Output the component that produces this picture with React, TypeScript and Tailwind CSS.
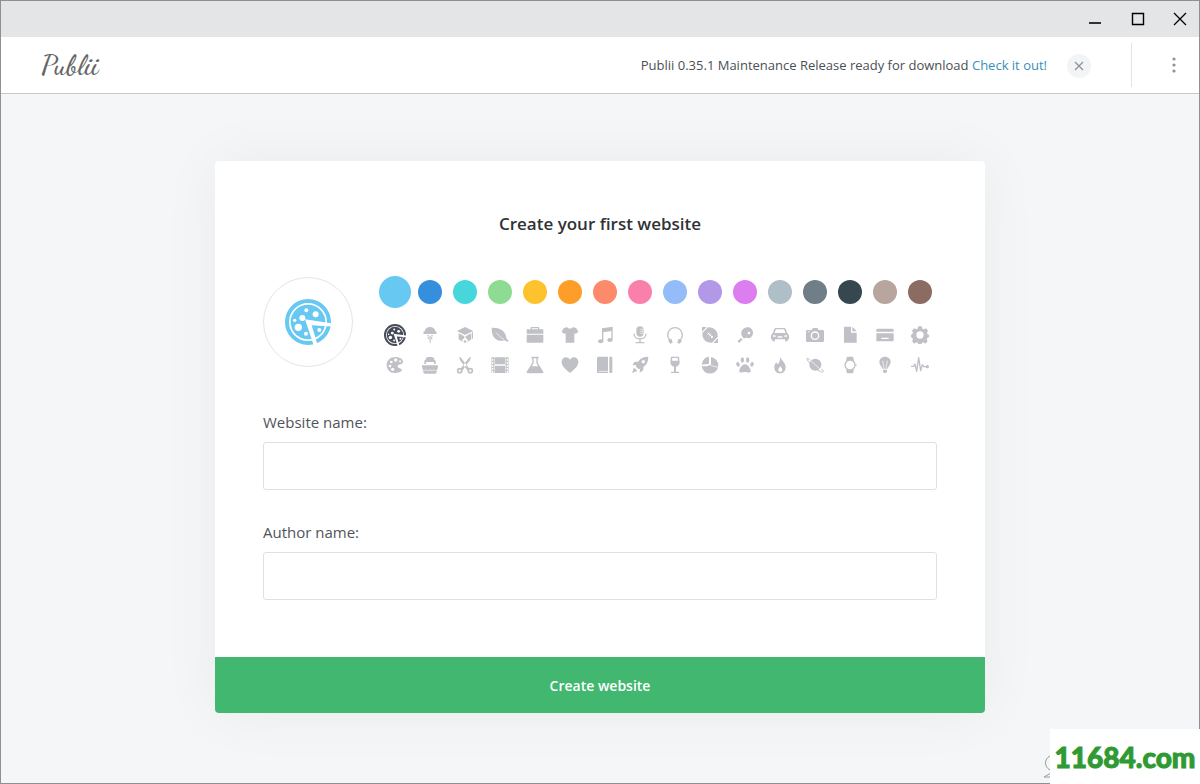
import { useState } from "react";
import type { FormEvent, ReactNode } from "react";
import clsx from "clsx";

const colors = [
  { name: "Sky", bg: "bg-[#67c8f2]", text: "text-[#67c8f2]" },
  { name: "Blue", bg: "bg-[#358fdc]", text: "text-[#358fdc]" },
  { name: "Turquoise", bg: "bg-[#47d6dc]", text: "text-[#47d6dc]" },
  { name: "Green", bg: "bg-[#8edb94]", text: "text-[#8edb94]" },
  { name: "Yellow", bg: "bg-[#fdc32e]", text: "text-[#fdc32e]" },
  { name: "Orange", bg: "bg-[#fe9e28]", text: "text-[#fe9e28]" },
  { name: "Coral", bg: "bg-[#fd8a6a]", text: "text-[#fd8a6a]" },
  { name: "Pink", bg: "bg-[#fb7fab]", text: "text-[#fb7fab]" },
  { name: "Cornflower", bg: "bg-[#94bcf8]", text: "text-[#94bcf8]" },
  { name: "Lavender", bg: "bg-[#b298e6]", text: "text-[#b298e6]" },
  { name: "Magenta", bg: "bg-[#dc7df0]", text: "text-[#dc7df0]" },
  { name: "Silver", bg: "bg-[#afbfc7]", text: "text-[#afbfc7]" },
  { name: "Slate", bg: "bg-[#707e88]", text: "text-[#707e88]" },
  { name: "Navy", bg: "bg-[#37474f]", text: "text-[#37474f]" },
  { name: "Sand", bg: "bg-[#b8a59d]", text: "text-[#b8a59d]" },
  { name: "Brown", bg: "bg-[#8c6c62]", text: "text-[#8c6c62]" },
];

// every glyph lives on a 54x54 grid
const icons: { name: string; art: ReactNode }[] = [
  {
    name: "Pizza",
    art: (
      <g transform="scale(0.3913)">
        <circle cx="69" cy="69" r="63" fill="none" stroke="currentColor" strokeWidth="12" />
        <circle cx="69" cy="69" r="52" />
        <path fill="#fff" d="M60 61l80 12v10l-60-4 18 60-11 3z" />
        <g fill="#fff">
          <circle cx="64" cy="34" r="6" />
          <circle cx="92" cy="46" r="9" />
          <circle cx="52" cy="57" r="9" />
          <circle cx="29" cy="64" r="5" />
          <circle cx="40" cy="85" r="11" />
          <circle cx="63" cy="104" r="6" />
          <circle cx="103" cy="93" r="6" />
        </g>
      </g>
    ),
  },
  {
    name: "Ice cream",
    art: (
      <>
        <path d="M11 24a4 4 0 0 1 0-8C12 8 18 3 27 3s15 5 16 13a4 4 0 0 1 0 8z" />
        <path d="M17 28l4 4 4-4zM24 33l3-3 4 3-4 4zM29 28l4 4 4-4zM19 36l3-3 4 4-4 3zM28 37l4-4 3 3-3 4zM24 41l3-3 4 3-4 4zM25 48l2-3 3 3-3 4z" />
      </>
    ),
  },
  {
    name: "Education",
    art: <path d="M27 3l25 12-25 12L3 15zM8 22l17 9v5l-6 5v6L8 40zM46 22l-17 9v5l6 5v6l11-7zM22 47l5-6 5 6-5 4zM48 18h3v20h-3z" />,
  },
  {
    name: "Leaf",
    art: (
      <>
        <path d="M2 5c24-1 42 8 44 32 2 4 4 5 7 6l-2 4c-4 0-7-2-9-4C18 49 1 35 2 5z" />
        <path d="M16 20c7 9 14 15 23 20" fill="none" stroke="#fff" strokeWidth="2" />
      </>
    ),
  },
  {
    name: "Briefcase",
    art: (
      <>
        <path d="M14 11V6q0-3 3-3h20q3 0 3 3v5h-4V7H18v4z" />
        <path d="M4 10h46q2 0 2 2v11H2V12q0-2 2-2zM2 26h50v21q0 3-3 3H5q-3 0-3-3z" />
      </>
    ),
  },
  {
    name: "T-shirt",
    art: <path d="M18 3c4 6 14 6 18 0l10 4 6 10-8 7-4-3v29H14V21l-4 3-8-7L8 7z" />,
  },
  {
    name: "Music",
    art: (
      <>
        <path d="M18 7l32-5v39h-4V15L22 19v26h-4z" />
        <ellipse cx="14" cy="46" rx="8" ry="6" />
        <ellipse cx="42" cy="42" rx="8" ry="6" />
      </>
    ),
  },
  {
    name: "Microphone",
    art: (
      <>
        <rect x="16" y="1" width="22" height="31" rx="11" />
        <path d="M28 10h10M28 16h10M28 22h10" stroke="#fff" strokeWidth="2" />
        <path d="M9 23c0 21 36 21 36 0M27 39v10M14 50h26" fill="none" stroke="currentColor" strokeWidth="4" />
      </>
    ),
  },
  {
    name: "Headphones",
    art: (
      <>
        <path d="M12 43A22 22 0 1 1 42 43" fill="none" stroke="currentColor" strokeWidth="4" />
        <path d="M9 38l8 2 3 10-7 3-6-7zM45 38l-8 2-3 10 7 3 6-7z" />
      </>
    ),
  },
  {
    name: "Football",
    art: (
      <>
        <path d="M3 3h14L3 17zM51 51H37l14-14zM21 4c19-1 31 13 29 29L33 50C14 51 3 39 4 21z" />
        <path d="M20 20l15 15M20 26l6-6M25 31l6-6M30 36l6-6" stroke="#fff" strokeWidth="3" />
      </>
    ),
  },
  {
    name: "Table tennis",
    art: (
      <>
        <path d="M18 31C10 14 25 1 39 4c16 5 15 25 3 32-6 2-13-4-18 2z" />
        <path d="M17 38L7 49" stroke="currentColor" strokeWidth="7" />
        <circle cx="39" cy="21" r="4" fill="#fff" />
      </>
    ),
  },
  {
    name: "Car",
    art: (
      <path
        fillRule="evenodd"
        d="M14 6h26l4 2 5 14q5 3 5 8v10h-4v6h-8v-6H12v6H4v-6H0V30q0-5 5-8L10 8zM15 10l-5 11h34l-5-11zM6 28v4h9l-2-4zM48 28v4h-9l2-4zM20 31v4h14v-4z"
      />
    ),
  },
  {
    name: "Camera",
    art: (
      <>
        <path d="M4 12h13l4-6h13l4 6h12q4 0 4 4v29q0 3-4 3H4q-4 0-4-3V16q0-4 4-4z" />
        <circle cx="27" cy="29" r="11" fill="none" stroke="#fff" strokeWidth="4" />
        <path d="M5 17h6" stroke="#fff" strokeWidth="2" />
      </>
    ),
  },
  {
    name: "Document",
    art: <path d="M9 2h21v18h17v30H9zM34 2l13 14H34z" />,
  },
  {
    name: "Credit card",
    art: <path fillRule="evenodd" d="M4 8h46q3 0 3 3v6H1v-6q0-3 3-3zM1 22h52v21q0 3-3 3H4q-3 0-3-3zM16 35v4h22v-4z" />,
  },
  {
    name: "Settings",
    art: (
      <path
        fillRule="evenodd"
        d="M22 1h10l2 7 4 2 7-3 6 7-3 7 1 3 5 2v8l-5 2-2 4 3 6-7 7-6-4-4 2-2 3H22l-2-3-4-2-6 4-7-7 3-6-2-4-4-2v-8l4-2 2-4-3-6 6-7 7 3 4-2zM27 16a11 11 0 1 0 0 22 11 11 0 0 0 0-22z"
      />
    ),
  },
  {
    name: "Palette",
    art: (
      <>
        <path d="M28 3c14 0 24 7 23 16-1 8-15 4-16 11-1 8 14 6 13 13-3 6-12 8-21 8C12 51 2 41 2 27S13 3 28 3z" />
        <g fill="#fff">
          <circle cx="29" cy="12" r="5" />
          <circle cx="16" cy="18" r="4" />
          <circle cx="12" cy="30" r="4" />
          <circle cx="20" cy="40" r="5" />
          <circle cx="42" cy="16" r="3" />
        </g>
      </>
    ),
  },
  {
    name: "Ship",
    art: (
      <>
        <path d="M10 24v-9q0-3 4-3 0-9 8-9h10q8 0 8 9 4 0 4 3v9h-5v-6H15v6z" />
        <path d="M4 28h46q2 0 1 4l-4 17q-1 4-5 4H12q-4 0-5-4L3 32q-1-4 1-4z" />
        <path d="M4 41c5 4 8 4 12 0 4 4 8 4 11 0 4 4 8 4 11 0 4 4 8 4 12 0" fill="none" stroke="#fff" strokeWidth="2" />
      </>
    ),
  },
  {
    name: "Scissors",
    art: (
      <>
        <path d="M9 2l6 3 26 34-6 5L12 13zM45 2l-6 3-26 34 6 5 23-31z" />
        <g fill="none" stroke="currentColor" strokeWidth="5">
          <circle cx="11" cy="44" r="6" />
          <circle cx="43" cy="44" r="6" />
        </g>
      </>
    ),
  },
  {
    name: "Film",
    art: (
      <>
        <path d="M12 4h30v21H12zM12 29h30v22H12z" />
        <path d="M6 4v47M48 4v47" stroke="currentColor" strokeWidth="9" />
        <path d="M5 9v42M49 9v42" stroke="#fff" strokeWidth="4" strokeDasharray="5 4" />
      </>
    ),
  },
  {
    name: "Flask",
    art: (
      <path
        fillRule="evenodd"
        d="M16 2h22v5h-3v13l17 27q2 5-4 5H6q-6 0-4-5l17-27V7h-3zM23 7v15l-6 9h20l-6-9V7z"
      />
    ),
  },
  {
    name: "Heart",
    art: <path d="M27 51C12 38 1 29 2 16 3 2 21-1 27 11 33-1 51 2 52 16c1 13-10 22-25 35z" />,
  },
  {
    name: "Book",
    art: (
      <>
        <path d="M7 2h29v49H7q-4 0-4-4V6q0-4 4-4zM40 2h6q3 0 3 4v41q0 4-3 4h-6z" />
        <path d="M9 46h28" stroke="#fff" strokeWidth="2" />
      </>
    ),
  },
  {
    name: "Rocket",
    art: (
      <>
        <path d="M52 2c-15 0-24 5-31 15H11L4 28l10-1c1 7 6 12 13 13l-1 10 11-7V33C47 26 52 17 52 2z" />
        <path d="M8 36c5 1 10 6 10 10l-8 2-6 4 1-6z" />
        <circle cx="37" cy="17" r="5" fill="#fff" />
      </>
    ),
  },
  {
    name: "Wine",
    art: (
      <path
        fillRule="evenodd"
        d="M15 2h24l2 17c0 8-5 12-11 13v15h9v4H15v-4h9V32c-6-1-11-5-11-13zM19 6l-1 8h18l-1-8z"
      />
    ),
  },
  {
    name: "Chart",
    art: (
      <>
        <path d="M30 3a25 25 0 1 1-28 28h14l14-5z" />
        <path d="M24 2v21L3 26C3 13 12 3 24 2z" />
        <path d="M29 28l21 6" stroke="#fff" strokeWidth="2" />
      </>
    ),
  },
  {
    name: "Paw",
    art: (
      <>
        <path d="M27 25c9 0 17 13 17 20 0 8-10 3-17 3s-17 5-17-3c0-7 8-20 17-20z" />
        <ellipse cx="19" cy="12" rx="5" ry="8" />
        <ellipse cx="35" cy="12" rx="5" ry="8" />
        <ellipse cx="6" cy="25" rx="5" ry="7" transform="rotate(-20 6 25)" />
        <ellipse cx="48" cy="25" rx="5" ry="7" transform="rotate(20 48 25)" />
      </>
    ),
  },
  {
    name: "Fire",
    art: (
      <>
        <path d="M27 1c3 12 17 18 17 33 0 12-8 18-17 18S10 46 10 34c0-8 3-12 7-16 0 4 1 6 4 7 5-7 7-14 6-24z" />
        <path fill="#fff" d="M28 30c2 5 6 7 6 11 0 8-12 8-12 0 0-4 4-6 6-11z" />
      </>
    ),
  },
  {
    name: "Planet",
    art: (
      <>
        <circle cx="28" cy="26" r="18" />
        <path d="M15 15l27 24" stroke="#fff" strokeWidth="2" />
        <path d="M13 13C3 4-1 5 6 15c10 14 26 26 38 32 9 4 11 1 2-9" fill="none" stroke="currentColor" strokeWidth="3" />
      </>
    ),
  },
  {
    name: "Watch",
    art: (
      <>
        <path d="M18 2h18l3 12H15zM15 41h24l-3 11H18z" />
        <circle cx="27" cy="27" r="15" fill="#fff" stroke="currentColor" strokeWidth="4" />
        <path d="M45 25v5" stroke="currentColor" strokeWidth="3" />
      </>
    ),
  },
  {
    name: "Balloon",
    art: (
      <>
        <path d="M27 2c10 0 17 7 17 15 0 9-6 13-10 21H20c-4-8-10-12-10-21C10 9 17 2 27 2zM21 41h12v8q-6 5-12 0z" />
        <path d="M20 14l4 24M34 14l-4 24" stroke="#fff" strokeWidth="2" />
      </>
    ),
  },
  {
    name: "Pulse",
    art: (
      <>
        <path
          d="M0 31h8l4-7 5 22 6-41 6 39 5-18 4 6h8"
          fill="none"
          stroke="currentColor"
          strokeWidth="4"
          strokeLinejoin="round"
        />
        <circle cx="49" cy="32" r="5" />
      </>
    ),
  },
];

function Glyph({ art, className }: { art: ReactNode; className: string }) {
  return (
    <svg viewBox="0 0 54 54" fill="currentColor" aria-hidden="true" className={className}>
      {art}
    </svg>
  );
}

function TitleBar() {
  return (
    <div className="flex h-9 items-center justify-end gap-7 bg-[#e4e5e7] pr-3 text-black">
      <button aria-label="Minimize" className="size-3.5">
        <svg viewBox="0 0 14 14" className="size-3.5">
          <path d="M0 11h12" stroke="#333" strokeWidth="2" />
        </svg>
      </button>
      <button aria-label="Maximize" className="size-3.5">
        <svg viewBox="0 0 14 14" className="size-3.5">
          <path d="M1.5 1.5h11v11h-11z" fill="none" stroke="currentColor" strokeWidth="1.4" />
        </svg>
      </button>
      <button aria-label="Close" className="size-3.5">
        <svg viewBox="0 0 14 14" className="size-3.5">
          <path d="M1 1l12 12M13 1L1 13" stroke="currentColor" strokeWidth="1.3" />
        </svg>
      </button>
    </div>
  );
}

function TopBar() {
  const [notice, setNotice] = useState(true);

  return (
    <header className="flex h-[57px] items-center border-b border-[#c8c9cb] bg-white pr-[17px] pl-10">
      <a href="#" className="font-['Dancing_Script','Brush_Script_MT',cursive] text-[28px] font-semibold text-[#666]">
        Publii
      </a>
      {notice ? (
        <div className="ml-auto flex items-center gap-5 pt-0.5 text-[13px] text-[#4a4f56]">
          <p>
            Publii 0.35.1 Maintenance Release ready for download{" "}
            <a href="#" className="text-[#3a8ebb]">
              Check it out!
            </a>
          </p>
          <button
            onClick={() => setNotice(false)}
            aria-label="Dismiss"
            className="flex size-6 items-center justify-center rounded-full bg-[#f3f4f6] text-[#8e939b]"
          >
            <svg viewBox="0 0 10 10" className="size-2.5">
              <path d="M1 1l8 8M9 1L1 9" stroke="currentColor" strokeWidth="1.3" />
            </svg>
          </button>
        </div>
      ) : null}
      <div className={clsx("flex h-11 items-center border-l border-[#e3e4e6] pl-[34px]", notice ? "ml-10" : "ml-auto")}>
        <button aria-label="Menu" className="flex size-4 items-center justify-center text-[#8e9196]">
          <svg viewBox="0 0 4 16" fill="currentColor" className="h-4 w-1">
            <circle cx="2" cy="2" r="1.6" />
            <circle cx="2" cy="8" r="1.6" />
            <circle cx="2" cy="14" r="1.6" />
          </svg>
        </button>
      </div>
    </header>
  );
}

function TextField({ id, label }: { id: string; label: string }) {
  return (
    <div className="mt-[30px]">
      <label htmlFor={id} className="mb-2 block text-[15px] leading-6 text-[#4f545b]">
        {label}
      </label>
      <input
        id={id}
        type="text"
        className="block h-12 w-full rounded-[3px] border border-[#dfe0e2] px-4 text-[15px] outline-none focus:border-[#3a8ebb]"
      />
    </div>
  );
}

export default function App() {
  const [color, setColor] = useState(0);
  const [icon, setIcon] = useState(0);

  function submit(event: FormEvent) {
    event.preventDefault();
  }

  return (
    <div className="relative flex min-h-screen flex-col border border-[#8f9093] bg-[#f5f6f8] font-['Open_Sans',sans-serif]">
      <TitleBar />
      <TopBar />

      <main className="flex-1 px-4 pt-[67px] pb-16">
        <form
          onSubmit={submit}
          className="mx-auto max-w-[770px] overflow-hidden rounded bg-white shadow-[0_0_60px_rgba(0,0,0,0.05)]"
        >
          <div className="px-12 pt-12 pb-[57px]">
            <h1 className="mb-[38px] text-center text-[17px] leading-[30px] font-semibold text-[#303236]">
              Create your first website
            </h1>

            <div className="flex gap-6">
              <div
                className={clsx(
                  "flex size-[90px] shrink-0 items-center justify-center rounded-full border border-[#e4e5e7]",
                  colors[color].text,
                )}
              >
                <Glyph art={icons[icon].art} className="size-[46px]" />
              </div>

              <div className="flex-1">
                <div className="mb-[13px] grid grid-cols-16">
                  {colors.map(({ name, bg }, i) => (
                    <div key={name} className="flex h-[30px] items-center justify-center">
                      <input
                        type="radio"
                        name="color"
                        aria-label={name}
                        checked={color === i}
                        onChange={() => setColor(i)}
                        className={clsx(
                          "shrink-0 cursor-pointer appearance-none rounded-full",
                          bg,
                          color === i ? "size-8" : "size-6",
                        )}
                      />
                    </div>
                  ))}
                </div>
                <div className="grid grid-cols-16">
                  {icons.map(({ name, art }, i) => (
                    <label
                      key={name}
                      className={clsx(
                        "relative flex h-[30px] cursor-pointer items-center justify-center",
                        icon === i ? "text-[#464b57]" : "text-[#c0c1c6]",
                      )}
                    >
                      <input
                        type="radio"
                        name="icon"
                        aria-label={name}
                        checked={icon === i}
                        onChange={() => setIcon(i)}
                        className="sr-only"
                      />
                      <Glyph art={art} className={icon === i ? "size-[22px]" : "size-[18px]"} />
                    </label>
                  ))}
                </div>
              </div>
            </div>

            <TextField id="website-name" label="Website name:" />
            <TextField id="author-name" label="Author name:" />
          </div>

          <button type="submit" className="block h-14 w-full bg-[#41b770] pt-0.5 text-sm font-semibold text-white">
            Create website
          </button>
        </form>
      </main>

      <svg viewBox="0 0 10 24" aria-hidden="true" className="absolute right-[145px] bottom-1 h-6 w-2.5">
        <path d="M6 1C0 4 0 12 6 15M0 22l7-4M0 22h8" fill="none" stroke="#9a9ca0" />
      </svg>
      <div className="absolute -right-px -bottom-px flex h-[55px] w-[150px] items-center justify-center bg-white font-['Lato',sans-serif] text-[28px] font-black text-[#2f9a33] [-webkit-text-stroke:1px_#2f9a33]">
        11684.com
      </div>
    </div>
  );
}
